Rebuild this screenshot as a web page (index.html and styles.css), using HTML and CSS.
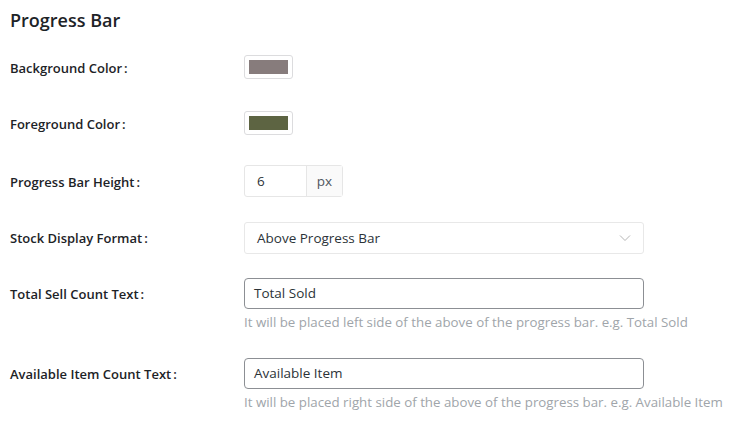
FILE: index.html
```html
<!DOCTYPE html>
<html>
<head>
<meta charset="utf-8">
<link rel="stylesheet" href="styles.css">
</head>
<body>
<div class="panel">
  <h2 class="title">Progress Bar</h2>
  <div class="row row-color">
    <div class="label">Background Color<span class="colon">:</span></div>
    <div class="control"><span class="swatch"><span class="swatch-fill bg"></span></span></div>
  </div>
  <div class="row row-color">
    <div class="label">Foreground Color<span class="colon">:</span></div>
    <div class="control"><span class="swatch"><span class="swatch-fill fg"></span></span></div>
  </div>
  <div class="row row-height">
    <div class="label">Progress Bar Height<span class="colon">:</span></div>
    <div class="control">
      <div class="num-group"><span class="num">6</span><span class="addon">px</span></div>
    </div>
  </div>
  <div class="row row-select">
    <div class="label">Stock Display Format<span class="colon">:</span></div>
    <div class="control">
      <div class="select"><span>Above Progress Bar</span>
        <svg class="chev" width="12" height="8" viewBox="0 0 12 8"><path d="M1 1.5 L6 6.5 L11 1.5" fill="none" stroke="#b5b5b5" stroke-width="1"/></svg>
      </div>
    </div>
  </div>
  <div class="row row-text">
    <div class="label">Total Sell Count Text<span class="colon">:</span></div>
    <div class="control">
      <div class="text-input">Total Sold</div>
      <div class="help">It will be placed left side of the above of the progress bar. e.g. Total Sold</div>
    </div>
  </div>
  <div class="row row-text">
    <div class="label">Available Item Count Text<span class="colon">:</span></div>
    <div class="control">
      <div class="text-input">Available Item</div>
      <div class="help">It will be placed right side of the above of the progress bar. e.g. Available Item</div>
    </div>
  </div>
</div>
</body>
</html>
```
FILE: styles.css
```css
html, body {
  margin: 0;
  padding: 0;
  background: #ffffff;
}
body {
  font-family: "Open Sans", "Noto Sans", sans-serif;
  color: #1d2327;
}
.panel {
  padding: 6px 10px 0 10px;
}
.title {
  margin: 0;
  font-size: 18px;
  font-weight: 600;
  line-height: 28px;
  color: #1d2327;
}
.row {
  display: flex;
  align-items: flex-start;
}
.label {
  width: 234px;
  flex: none;
  font-size: 13px;
  font-weight: 600;
  color: #1d2327;
}
.colon {
  margin-left: 2px;
}
.row-color {
  margin-top: 21px;
  height: 24px;
}
.row-color + .row-color {
  margin-top: 32px;
}
.row-color .label {
  line-height: 26px;
}
.swatch {
  display: flex;
  width: 49px;
  height: 24px;
  box-sizing: border-box;
  border: 1px solid #dcdcde;
  border-radius: 3px;
  padding: 4px 4px;
}
.swatch-fill {
  flex: 1;
}
.swatch-fill.bg { background: #877c7c; }
.swatch-fill.fg { background: #5d6442; }

.row-height {
  margin-top: 30px;
}
.row-height .label {
  line-height: 34px;
}
.row-select .label {
  line-height: 32px;
}
.num-group {
  display: flex;
  height: 32px;
  width: 99px;
  box-sizing: border-box;
  border: 1px solid #e6e6e6;
  border-radius: 3px;
  font-size: 13.5px;
}
.num {
  width: 62px;
  box-sizing: border-box;
  padding-left: 12px;
  line-height: 30px;
  color: #2c3338;
  border-right: 1px solid #e6e6e6;
}
.addon {
  flex: 1;
  text-align: center;
  line-height: 30px;
  color: #50575e;
  background: #fafafa;
}
.row-select {
  margin-top: 23px;
}
.select {
  display: flex;
  align-items: center;
  justify-content: space-between;
  width: 400px;
  height: 32px;
  box-sizing: border-box;
  border: 1px solid #e8e8e8;
  border-radius: 3px;
  padding: 0 12px 0 12px;
  font-size: 13.5px;
  color: #2c3338;
}
.row-text {
  margin-top: 24px;
}
.row-text + .row-text {
  margin-top: 27px;
}
.row-text .label {
  line-height: 32px;
}
.text-input {
  width: 400px;
  height: 31px;
  box-sizing: border-box;
  border: 1px solid #8c8f94;
  border-radius: 4px;
  padding-left: 9px;
  line-height: 29px;
  font-size: 13.5px;
  color: #2c3338;
}
.help {
  margin-top: 5px;
  font-size: 13.3px;
  line-height: 17px;
  color: #a0a5aa;
  white-space: nowrap;
}
```
